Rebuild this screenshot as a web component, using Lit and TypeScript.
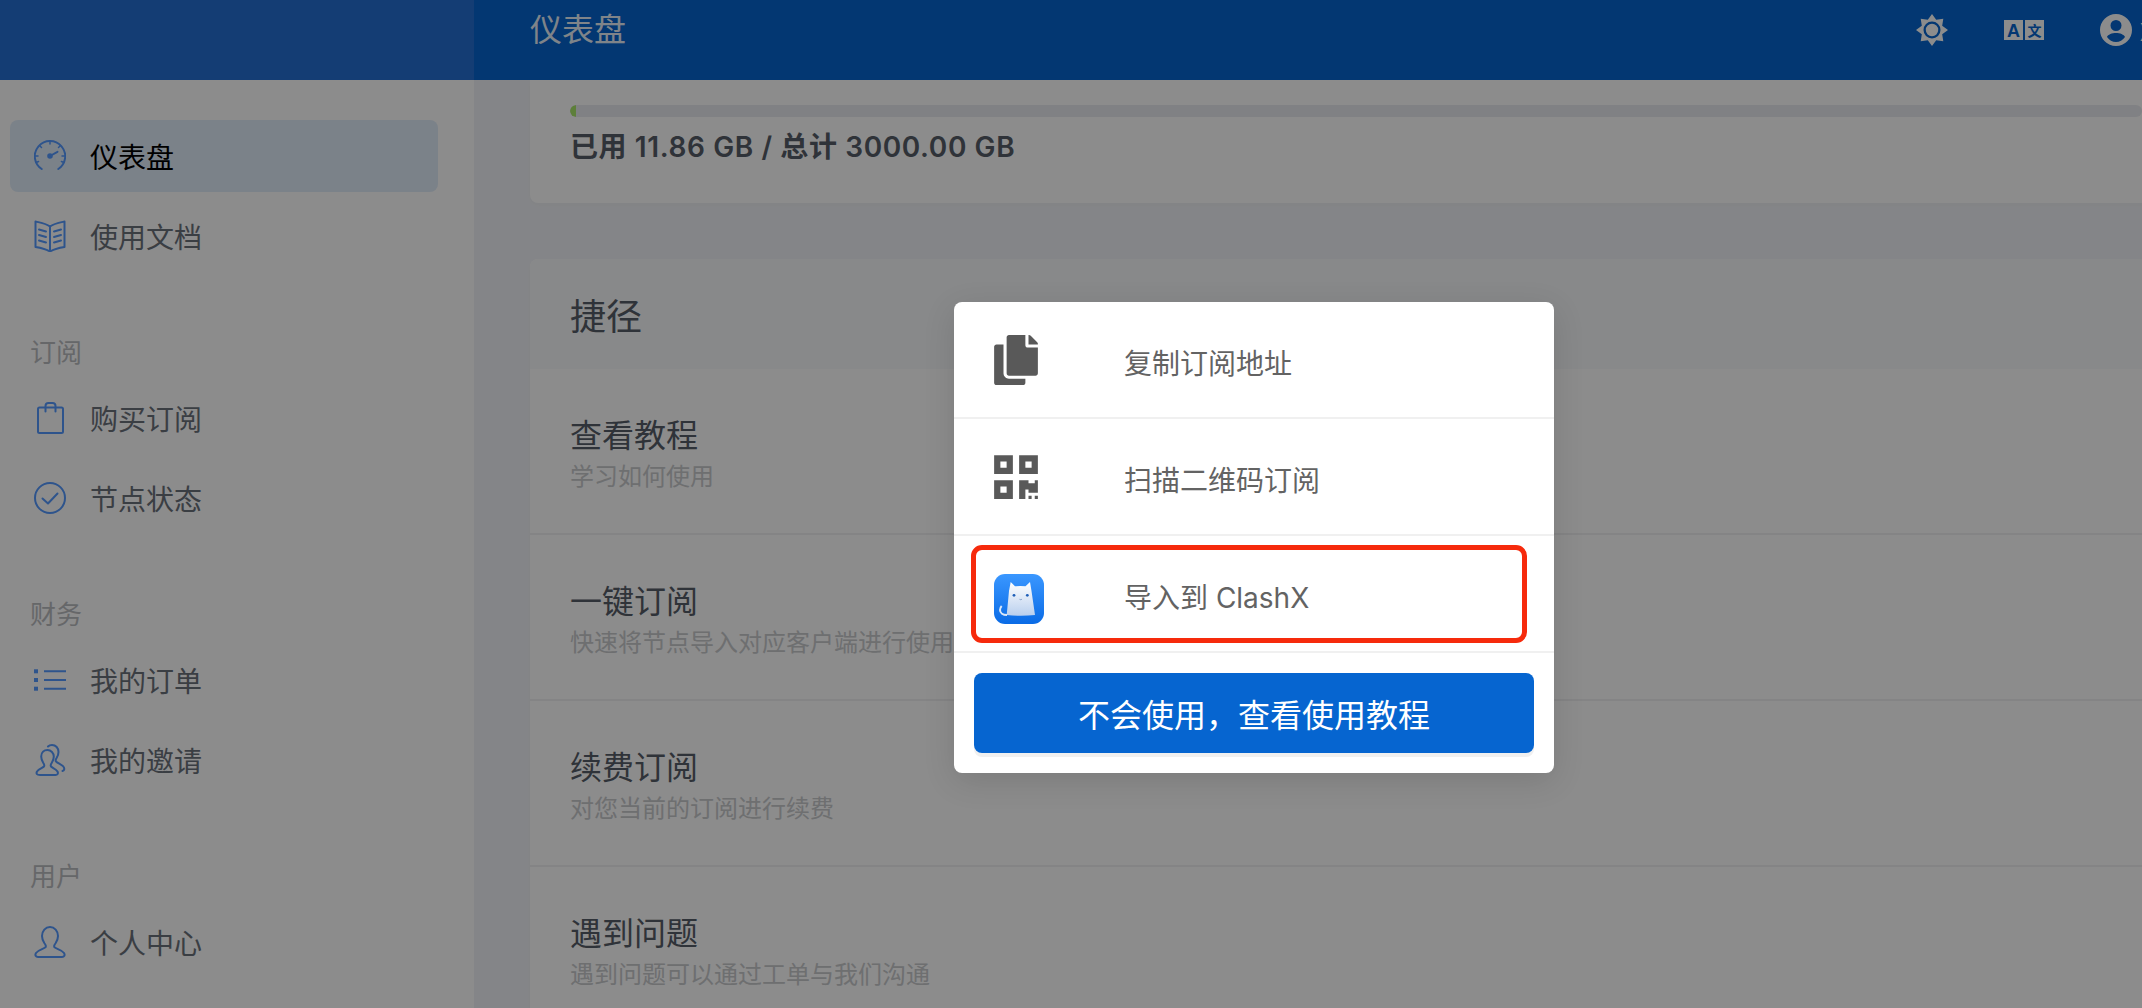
import { LitElement, html, css, svg } from "lit";
import { customElement } from "lit/decorators.js";

const gauge = svg`<path d="M7.700 29A15.200 15.200 0 1 1 24.300 29" /><path d="M16 1v3M5.500 5.500l2 2M26.500 5.500l-2 2M1 16h3M28 16h3M2 22.500l2.600-1M30 22.500l-2.600-1" stroke-width="1.500" /><path d="M16 16l7.500-4.200" /><circle cx="16" cy="16" r="1.800" fill="currentColor" />`;
const book = svg`<path d="M16 6.500C12 3.500 6 2.500 1.500 1.500V27c5 .8 10 1.800 14.500 4.500 4.500-2.700 9.500-3.700 14.500-4.500V1.500C26 2.500 20 3.500 16 6.500V31.500" /><path d="M5 9.500l7 2M5 15l7 2M5 20.500l7 2M27 9.500l-7 2M27 15l-7 2M27 20.500l-7 2" />`;
const bag = svg`<rect x="4" y="5.500" width="25" height="25.500" rx="1.500" /><path d="M11.500 9.500V4a3 3 0 0 1 3-3h4a3 3 0 0 1 3 3v5.500" />`;
const check = svg`<circle cx="16" cy="16" r="15" /><path d="M8.500 16.500l5.500 5 9.500-10" />`;
const list = svg`<path d="M10 7.300h22M10 16h22M10 24.700h22" stroke-linecap="butt" /><rect y="5.300" width="4" height="4" fill="currentColor" stroke="none" /><rect y="14" width="4" height="4" fill="currentColor" stroke="none" /><rect y="22.700" width="4" height="4" fill="currentColor" stroke="none" />`;
const people = svg`<path d="M6 31h15.500c2 0 3-1.500 2-3.500-1.500-2.700-5-3.500-6.500-5-.8-1 0-2.500.8-3.700 1.500-2.300 2-4 2-6.300 0-3.500-2.800-6.500-6.300-6.500S7.200 8.500 7.200 12.500c0 2.300.6 4 2 6.300.8 1.200 1.600 2.700.8 3.700-1.500 1.500-5 2.300-7 5-1 2-.5 3.500 3 3.500z" /><path d="M14 2.500C15 1.500 16.500 1 18 1c3.800 0 6.500 3 6.500 7 0 2.200-.6 3.800-1.800 5.800-.8 1.200-1.500 2.700-.7 3.700 1.500 1.500 5 2.500 7 4.700 1.800 2 1.800 4.300-.5 4.800" />`;
const person = svg`<path d="M4 31h24c2.300 0 3.300-1.800 2-4-2-3-7.500-4-9.500-5.700-1-1.300.2-3 1.200-4.300 1.600-2.500 2.300-4.500 2.300-7C24 5 20.500 1 16 1S8 5 8 10c0 2.500.7 4.500 2.300 7 1 1.300 2.200 3 1.200 4.300C9.500 23 4 24 2 27c-1.300 2.200-.3 4 2 4z" />`;

interface NavItem {
	label: string;
	icon: unknown;
	active?: boolean;
}

interface NavGroup {
	title?: string;
	items: NavItem[];
}

const groups: NavGroup[] = [
	{
		items: [
			{ label: "仪表盘", icon: gauge, active: true },
			{ label: "使用文档", icon: book },
		],
	},
	{
		title: "订阅",
		items: [
			{ label: "购买订阅", icon: bag },
			{ label: "节点状态", icon: check },
		],
	},
	{
		title: "财务",
		items: [
			{ label: "我的订单", icon: list },
			{ label: "我的邀请", icon: people },
		],
	},
	{
		title: "用户",
		items: [{ label: "个人中心", icon: person }],
	},
];

const shortcuts = [
	{ title: "查看教程", desc: "学习如何使用" },
	{ title: "一键订阅", desc: "快速将节点导入对应客户端进行使用" },
	{ title: "续费订阅", desc: "对您当前的订阅进行续费" },
	{ title: "遇到问题", desc: "遇到问题可以通过工单与我们沟通" },
];

@customElement("app-root")
export class AppRoot extends LitElement {
	static styles = css`
		:host {
			display: block;
			height: 1008px;
			overflow: hidden;
			position: relative;
			font-family: "Noto Sans CJK SC", "Noto Sans", sans-serif;
			color: #5c6068;
		}

		.page {
			display: grid;
			grid-template-columns: 474px 1fr;
			grid-template-rows: 80px 1fr;
			height: 1008px;
			background: #f1f3f7;
		}

		.brand {
			background: #2570d4;
		}

		.topbar {
			background: #0665d0;
			display: flex;
			align-items: flex-start;
			overflow: hidden;
		}

		.page-title {
			margin-left: 56px;
			font-size: 32px;
			line-height: 54px;
			color: rgba(255, 255, 255, 0.92);
			font-weight: 400;
			flex: 1;
		}

		.actions {
			display: flex;
			align-items: center;
			height: 60px;
			flex: none;
			width: 226px;
			overflow: hidden;
		}

		.actions svg {
			display: block;
			flex: none;
			fill: #fff;
		}

		.sun {
			margin-right: 56px;
		}

		.translate {
			margin-right: 56px;
		}

		.user-name {
			flex: none;
			margin-left: 8px;
			font-size: 24px;
			color: #fff;
			white-space: nowrap;
		}

		.sidebar {
			background: #fff;
			padding: 40px 36px 0 10px;
		}

		.nav-title {
			height: 40px;
			line-height: 40px;
			margin: 59px 0 11px 20px;
			font-size: 26px;
			color: #babcbf;
		}

		.nav-list {
			display: flex;
			flex-direction: column;
			gap: 8px;
		}

		.nav-item {
			display: flex;
			align-items: center;
			height: 72px;
			padding-left: 24px;
			border-radius: 8px;
			font-size: 28px;
			color: #6b717b;
		}

		.nav-item.active {
			background: #e1edfa;
			color: #000;
		}

		.nav-item svg {
			width: 32px;
			height: 32px;
			flex: none;
			margin-right: 24px;
			fill: none;
			stroke: #5499ff;
			stroke-width: 2;
			stroke-linejoin: round;
			stroke-linecap: round;
			color: #5499ff;
		}

		.main {
			padding-left: 56px;
			overflow: hidden;
		}

		.card {
			background: #fff;
			margin-right: -40px;
			border-radius: 8px;
			box-shadow: 0 2px 4px rgba(0, 0, 0, 0.02);
		}

		.usage {
			height: 123px;
			box-sizing: border-box;
			padding: 25px 40px 0;
			margin-bottom: 56px;
			border-radius: 0 0 8px 8px;
		}

		.track {
			height: 12px;
			border-radius: 6px;
			background: #eaecf0;
			overflow: hidden;
		}

		.fill {
			height: 100%;
			background: #aae86a;
			border-radius: 6px 0 0 6px;
		}

		.usage-text {
			margin-top: 10px;
			line-height: 40px;
			font-family: "Inter", "Noto Sans CJK SC", sans-serif;
			font-size: 28px;
			letter-spacing: 0.6px;
			font-weight: 600;
			color: #575d68;
		}

		.shortcut-head {
			height: 110px;
			line-height: 110px;
			padding-left: 40px;
			background: #f8f9fb;
			border-radius: 8px 8px 0 0;
			font-size: 36px;
			color: #575d68;
		}

		.shortcut {
			height: 166px;
			box-sizing: border-box;
			padding: 40px 40px 0;
			border-bottom: 2px solid #f0f1f3;
		}

		.shortcut-title {
			font-size: 32px;
			line-height: 48px;
			color: #575d68;
		}

		.shortcut-desc {
			font-size: 24px;
			line-height: 36px;
			color: #c8cacd;
		}

		.backdrop {
			position: absolute;
			inset: 0;
			background: rgba(0, 0, 0, 0.45);
		}

		.modal {
			position: absolute;
			left: 954px;
			top: 302px;
			width: 600px;
			height: 471px;
			background: #fff;
			border-radius: 8px;
			box-shadow: 0 8px 32px rgba(0, 0, 0, 0.12);
			overflow: hidden;
		}

		.row {
			display: flex;
			align-items: center;
			height: 115px;
			padding-left: 40px;
			border-bottom: 2px solid #f0f0f0;
			font-size: 28px;
			color: #636363;
		}

		.row-icon {
			width: 130px;
			flex: none;
			display: flex;
			align-items: center;
		}

		.row-icon svg {
			display: block;
			fill: #595959;
		}

		.row-icon .cat {
			margin-top: 10px;
		}

		.row-text {
			padding-top: 5px;
			font-family: "Inter", "Noto Sans CJK SC", sans-serif;
		}

		.btn {
			display: flex;
			align-items: center;
			justify-content: center;
			height: 80px;
			margin: 20px;
			background: #0665d0;
			border-radius: 8px;
			box-shadow: 0 4px 0 #f0f0f0;
			color: #fff;
			font-size: 32px;
		}

		.marker {
			position: absolute;
			left: 17px;
			top: 243px;
			width: 556px;
			height: 98px;
			box-sizing: border-box;
			border: 5px solid #f62a0c;
			border-radius: 11px;
			pointer-events: none;
		}
	`;

	private renderNav() {
		return groups.map(
			(group) => html`
				${group.title ? html`<div class="nav-title">${group.title}</div>` : ""}
				<div class="nav-list">
					${group.items.map(
						(item) => html`
							<div class="nav-item ${item.active ? "active" : ""}">
								<svg viewBox="0 0 32 32">${item.icon}</svg>
								<span>${item.label}</span>
							</div>
						`,
					)}
				</div>
			`,
		);
	}

	private renderCat() {
		return html`
			<svg class="cat" width="50" height="50" viewBox="0 0 50 50">
				<defs>
					<linearGradient id="cat-bg" x1="0" y1="0" x2="0" y2="1">
						<stop offset="0" stop-color="#3a97ff" />
						<stop offset="1" stop-color="#0a6be6" />
					</linearGradient>
					<linearGradient id="cat-body" x1="0" y1="0" x2="0" y2="1">
						<stop offset="0" stop-color="#ffffff" />
						<stop offset="1" stop-color="#b9cfee" />
					</linearGradient>
				</defs>
				<rect width="50" height="50" rx="11" fill="url(#cat-bg)" />
				<path
					d="M16.700 8L21 12.300Q26 11.500 31.500 12.300L36 8 37.500 17 41 41Q27 42.500 12.700 41L15 17z"
					fill="url(#cat-body)"
				/>
				<path
					d="M13 41C9 41 6 39 6 36c0-1.800.7-3 1.700-4"
					fill="none"
					stroke="#dbe7f7"
					stroke-width="2"
				/>
				<circle cx="20" cy="21.300" r="1.400" fill="#1f5fb8" />
				<circle cx="33.300" cy="21.300" r="1.400" fill="#1f5fb8" />
				<path d="M25.500 25.300q1.200.8 2.400 0" fill="none" stroke="#6f8fc0" stroke-width=".8" />
			</svg>
		`;
	}

	render() {
		return html`
			<div class="page">
				<div class="brand"></div>
				<header class="topbar">
					<div class="page-title">仪表盘</div>
					<div class="actions">
						<svg class="sun" width="32" height="32" viewBox="0 0 32 32">
							<path
								fill-rule="evenodd"
								d="M16 0l4.200 5.800 7.100-1.100-1.100 7.100L32 16l-5.800 4.200 1.100 7.100-7.100-1.100L16 32l-4.200-5.800-7.100 1.100 1.100-7.100L0 16l5.800-4.200L4.700 4.700l7.100 1.100zM16 7.500a8.500 8.500 0 1 0 0 17 8.500 8.500 0 0 0 0-17zM16 9.800a6.200 6.200 0 1 1 0 12.400 6.200 6.200 0 0 1 0-12.400z"
							/>
						</svg>
						<svg class="translate" width="40" height="20" viewBox="0 0 40 20">
							<rect width="19" height="20" />
							<rect x="21" width="19" height="20" />
							<text
								x="9.500"
								y="16.500"
								text-anchor="middle"
								font-size="18"
								font-weight="700"
								font-family="Liberation Sans"
								fill="#0665d0"
							>A</text>
							<text
								x="30.500"
								y="15.500"
								text-anchor="middle"
								font-size="14"
								font-weight="700"
								font-family="Noto Sans CJK SC"
								fill="#0665d0"
							>文</text>
						</svg>
						<svg width="32" height="32" viewBox="0 0 32 32">
							<path
								fill-rule="evenodd"
								d="M16 0a16 16 0 1 1 0 32 16 16 0 0 1 0-32zM16 6a5.500 5.500 0 1 0 0 11 5.500 5.500 0 0 0 0-11zM16 19c-4 0-8 1.500-9 4 2 3 5.500 5 9 5s7-2 9-5c-1-2.500-5-4-9-4z"
							/>
						</svg>
						<span class="user-name">X</span>
					</div>
				</header>
				<aside class="sidebar">${this.renderNav()}</aside>
				<main class="main">
					<section class="card usage">
						<div class="track"><div class="fill" style="width: 0.4%"></div></div>
						<div class="usage-text">已用 11.86 GB / 总计 3000.00 GB</div>
					</section>
					<section class="card">
						<div class="shortcut-head">捷径</div>
						${shortcuts.map(
							(s) => html`
								<div class="shortcut">
									<div class="shortcut-title">${s.title}</div>
									<div class="shortcut-desc">${s.desc}</div>
								</div>
							`,
						)}
					</section>
				</main>
			</div>
			<div class="backdrop"></div>
			<div class="modal">
				<div class="row">
					<div class="row-icon">
						<svg width="44" height="50" viewBox="0 0 448 512">
							<path
								d="M320 448v40c0 13.255-10.745 24-24 24H24c-13.255 0-24-10.745-24-24V120c0-13.255 10.745-24 24-24h72v296c0 30.879 25.121 56 56 56h168zm0-344V0H152c-13.255 0-24 10.745-24 24v368c0 13.255 10.745 24 24 24h272c13.255 0 24-10.745 24-24V128H344c-13.200 0-24-10.800-24-24zm120.971-31.029L375.029 7.029A24 24 0 0 0 358.059 0H352v96h96v-6.059a24 24 0 0 0-7.029-16.970z"
							/>
						</svg>
					</div>
					<span class="row-text">复制订阅地址</span>
				</div>
				<div class="row">
					<div class="row-icon">
						<svg width="44" height="50" viewBox="0 0 448 512">
							<path
								d="M0 224h192V32H0v192zM64 96h64v64H64V96zm192-64v192h192V32H256zm128 128h-64V96h64v64zM0 480h192V288H0v192zm64-128h64v64H64v-64zm352-64h32v128h-96v-32h-32v96h-64V288h96v32h64v-32zm0 160h32v32h-32v-32zm-64 0h32v32h-32v-32z"
							/>
						</svg>
					</div>
					<span class="row-text">扫描二维码订阅</span>
				</div>
				<div class="row">
					<div class="row-icon">${this.renderCat()}</div>
					<span class="row-text">导入到 ClashX</span>
				</div>
				<div class="btn">不会使用&#xFF0C;查看使用教程</div>
				<div class="marker"></div>
			</div>
		`;
	}
}
